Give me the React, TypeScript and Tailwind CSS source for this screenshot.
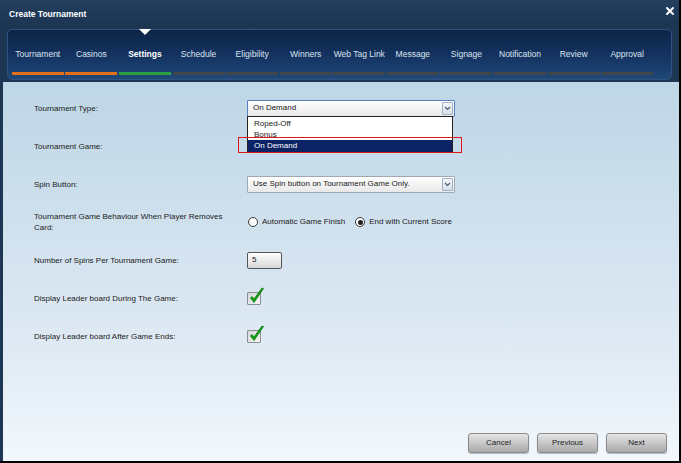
import { X } from 'lucide-react';

const tabs = [
  { label: 'Tournament', state: 'done' },
  { label: 'Casinos', state: 'done' },
  { label: 'Settings', state: 'active' },
  { label: 'Schedule', state: 'todo' },
  { label: 'Eligibility', state: 'todo' },
  { label: 'Winners', state: 'todo' },
  { label: 'Web Tag Link', state: 'todo' },
  { label: 'Message', state: 'todo' },
  { label: 'Signage', state: 'todo' },
  { label: 'Notification', state: 'todo' },
  { label: 'Review', state: 'todo' },
  { label: 'Approval', state: 'todo' },
];

function Chevron() {
  return (
    <svg width="7" height="5" viewBox="0 0 7 5">
      <path d="M1 1 L3.5 3.5 L6 1" fill="none" stroke="#4a5a70" strokeWidth="1.2" />
    </svg>
  );
}

function Select({ value, focused }: { value: string; focused?: boolean }) {
  return (
    <div
      className={`w-[208px] h-[17px] flex items-center justify-between pl-[5px] pr-[1px] border rounded-[1px] bg-gradient-to-b from-white to-[#e8e8e8] ${
        focused ? 'border-[#5a7fc0]' : 'border-[#a0a8b4]'
      }`}
    >
      <span>{value}</span>
      <span className="w-[11px] h-[13px] flex items-center justify-center border border-[#9fb0c8] rounded-[1px] bg-gradient-to-b from-[#f4f6fa] to-[#d8dee8]">
        <Chevron />
      </span>
    </div>
  );
}

function CheckBox() {
  return (
    <div className="relative w-[14px] h-[13px] border border-[#8a8f96] rounded-[1px] bg-gradient-to-br from-[#d4d6d8] to-[#f4f4f4]">
      <svg className="absolute left-[1px] -top-[6px]" width="16" height="18" viewBox="0 0 16 18">
        <path d="M1.5 11 L5 15.5 L14.5 1.5 L13 1 L5 12 L3 9.5 Z" fill="#12a012" stroke="#0a7a0a" strokeWidth="0.8" />
      </svg>
    </div>
  );
}

function Radio({ checked }: { checked?: boolean }) {
  return (
    <span className="w-[10px] h-[10px] rounded-full border border-[#3a3a3a] bg-white flex items-center justify-center">
      {checked && <span className="w-[5px] h-[5px] rounded-full bg-[#222]" />}
    </span>
  );
}

function Row({ label, children }: { label: React.ReactNode; children?: React.ReactNode }) {
  return (
    <div className="h-[38px] flex items-center">
      <div className="w-[213px] leading-[11px]">{label}</div>
      <div className="flex items-center">{children}</div>
    </div>
  );
}

function Button({ children }: { children: React.ReactNode }) {
  return (
    <button className="w-[61px] h-[20px] rounded-[3px] border border-[#8c8c8c] bg-gradient-to-b from-[#e4e4e4] via-[#c8c8c8] to-[#a8a8a8] text-[#222] shadow-[0_1px_1px_rgba(0,0,0,0.25)]">
      {children}
    </button>
  );
}

export default function App() {
  return (
    <div
      className="w-[681px] h-[463px] flex flex-col bg-[#1d3653] border-r-2 border-b-2 border-black text-[8px] text-[#1a1a1a] overflow-hidden"
      style={{ fontFamily: '"Liberation Sans", Arial, sans-serif' }}
    >
      {/* Title bar */}
      <div className="h-[27px] shrink-0 flex items-center justify-between pl-[9px] pr-[3px] bg-gradient-to-b from-[#23405e] to-[#1b3452]">
        <span className="text-white font-bold text-[8.5px] mt-[1px]">Create Tournament</span>
        <X size={12} strokeWidth={4} className="text-white -mt-[6px]" />
      </div>

      {/* Tabs */}
      <div className="relative mx-[7px] mt-[2px] h-[51px] shrink-0 rounded-[5px] border border-[#2e5380] bg-gradient-to-b from-[#0c2546] via-[#143260] to-[#204878] pl-[3px] pt-[17px]">
        <div className="absolute left-[131px] -top-[1px] w-0 h-0 border-l-[6px] border-r-[6px] border-t-[6px] border-l-transparent border-r-transparent border-t-white" />
        <div className="grid grid-cols-12 w-[643px]">
          {tabs.map((tab) => (
            <div key={tab.label} className="flex flex-col items-center">
              <span
                className={`h-[15px] leading-[15px] whitespace-nowrap text-[8.5px] ${
                  tab.state === 'active' ? 'text-white font-bold' : 'text-[#dbe4ef]'
                }`}
              >
                {tab.label}
              </span>
              <span
                className={`mt-[10px] h-[3px] w-[52px] ${
                  tab.state === 'done'
                    ? 'bg-[#e0701e]'
                    : tab.state === 'active'
                    ? 'bg-[#2aa040]'
                    : 'bg-[#40464c]'
                }`}
              />
            </div>
          ))}
        </div>
      </div>

      {/* Content */}
      <div className="ml-[3px] mt-[2px] flex-1 flex flex-col bg-gradient-to-b from-[#bed6e6] via-[#dfeaf4] via-70% to-[#f2f8fd]">
        <div className="flex-1 pl-[31px] pt-[7px]">
          <Row label="Tournament Type:">
            <div className="relative">
              <Select value="On Demand" focused />
              <div className="absolute left-0 top-[16px] w-[206px] bg-white border border-[#222] z-10 pt-[1px]">
                <div className="h-[11px] leading-[11px] pl-[6px]">Roped-Off</div>
                <div className="h-[11px] leading-[11px] pl-[6px]">Bonus</div>
                <div className="h-[12px] leading-[12px] pl-[6px] bg-[#0c2466] text-white">On Demand</div>
              </div>
              <div className="absolute -left-[9px] top-[37px] w-[224px] h-[16px] border border-[#e01818] z-20" />
            </div>
          </Row>
          <Row label="Tournament Game:" />
          <Row label="Spin Button:">
            <Select value="Use Spin button on Tournament Game Only." />
          </Row>
          <Row
            label={
              <>
                Tournament Game Behaviour When Player Removes
                <br />
                Card:
              </>
            }
          >
            <label className="flex items-center gap-[4px] ml-[1px]">
              <Radio />
              Automatic Game Finish
            </label>
            <label className="flex items-center gap-[4px] ml-[10px]">
              <Radio checked />
              End with Current Score
            </label>
          </Row>
          <Row label="Number of Spins Per Tournament Game:">
            <div className="w-[35px] h-[17px] pl-[4px] flex items-center border border-[#555] rounded-[2px] bg-gradient-to-b from-white to-[#d8d8d8]">
              5
            </div>
          </Row>
          <Row label="Display Leader board During The Game:">
            <CheckBox />
          </Row>
          <Row label="Display Leader board After Game Ends:">
            <CheckBox />
          </Row>
        </div>

        <div className="flex justify-end gap-[8px] pr-[12px] pb-[8px]">
          <Button>Cancel</Button>
          <Button>Previous</Button>
          <Button>Next</Button>
        </div>
      </div>
    </div>
  );
}
